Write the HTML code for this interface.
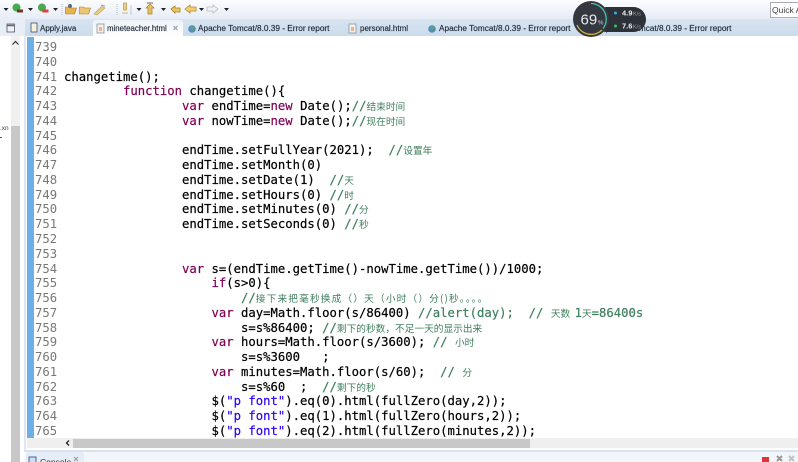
<!DOCTYPE html>
<html><head><meta charset="utf-8">
<style>
html,body{margin:0;padding:0;background:#fff}
#r{position:relative;width:798px;height:462px;overflow:hidden;background:#fff;font-family:"Liberation Sans","Noto Sans CJK SC",sans-serif;filter:blur(.35px)}
#r div{position:absolute}
.l{left:35px;width:740px;height:15px;white-space:pre;font:12.25px/15px "DejaVu Sans Mono","Noto Sans CJK SC",monospace;color:#000;-webkit-text-stroke:.2px currentColor}
.n{position:absolute;left:0;color:#787878;-webkit-text-stroke:0}
.t{position:absolute;left:29px}
.k{color:#7f0055}.s{color:#2a00ff}.c{color:#3f7f5f}.c i{font:normal 9.7px "Noto Sans CJK SC",sans-serif;-webkit-text-stroke:0}
.tab{top:23px;color:#1f2a38;white-space:pre;line-height:12px;-webkit-text-stroke:.15px currentColor}
</style></head><body><div id="r">

<div style="left:0;top:0;width:798px;height:19px;background:linear-gradient(#fbfcfe,#e6ecf6)"></div>
<div style="left:0;top:19px;width:798px;height:17px;background:linear-gradient(#d8e4f1,#cbdbeb)"></div>
<div style="left:0;top:19px;width:25px;height:17px;background:#e8eef6"></div>
<div style="left:93px;top:20px;width:90px;height:17px;background:linear-gradient(#eef3f9,#fff);border-radius:3px 3px 0 0"></div>

<svg style="position:absolute;left:0;top:0" width="240" height="36" viewBox="0 0 240 36">
<path d="M3.500 8h5l-2.500 3z M28 8h5l-2.500 3z M53 8h5l-2.500 3z M136.500 8h5l-2.500 3z M161 8h5l-2.500 3z M199 8h5l-2.500 3z M224 8h5l-2.500 3z" fill="#222"/>
<circle cx="16.500" cy="7.500" r="4" fill="#4aa850"/><rect x="17" y="9.500" width="6" height="3" fill="#6e3a20"/>
<circle cx="42" cy="7.500" r="4" fill="#4aa850"/><rect x="42.500" y="9.500" width="6" height="3" fill="#e2403a"/>
<path d="M62 4v11" stroke="#b5bcc8" stroke-dasharray="1 1"/>
<path d="M65.500 7h4l1 1h6l-2 6h-9z" fill="#e8b24e" stroke="#a97a28" stroke-width=".6"/><circle cx="70" cy="6" r="2" fill="#5a6a8a"/>
<path d="M79.500 7h4l1 1h6l-2 6h-9z" fill="#eec673" stroke="#a97a28" stroke-width=".6"/>
<path d="M94 14l8-8 3 2-8 7z" fill="#e9cd8a" stroke="#c0a050" stroke-width=".6"/><path d="M101 5l4 1" stroke="#9aa5b8"/>
<path d="M117 4v11" stroke="#b5bcc8" stroke-dasharray="1 1"/>
<path d="M123.500 3h3v7h-3z M122 13h6" fill="#e8d08a" stroke="#bfa050" stroke-width=".8"/>
<path d="M131 5v10" stroke="#c5cbd5"/>
<path d="M146 8l4-4 4 4h-2v6h-4v-6z" fill="#e9c05f" stroke="#a5802c" stroke-width=".7"/><path d="M147 3h6" stroke="#667"/>
<path d="M171 9l4-3v2h5v4h-5v1z" fill="#efc65c" stroke="#a5802c" stroke-width=".8"/>
<path d="M185 9l5-4v2h6v4h-6v2z" fill="#f3d070" stroke="#b08a30" stroke-width=".8"/>
<path d="M218 9l-5-4v2h-6v4h6v2z" fill="#f1f2f4" stroke="#b6bbc4" stroke-width=".8"/>
<rect x="7" y="24" width="7.500" height="8" fill="#eef1f6" stroke="#667" stroke-width=".9"/><path d="M7 25.500h7.500" stroke="#667" stroke-width="1.500"/>
<rect x="31" y="23" width="6" height="9" fill="#f4f1df" stroke="#40506a" stroke-width=".8"/>
<rect x="97" y="24" width="7" height="9" fill="#f5efe6" stroke="#8a94a5" stroke-width=".8"/><path d="M99 28h3M99 30h3" stroke="#d07a4a"/>
<path d="M173.500 26l4 4M177.500 26l-4 4" stroke="#a5a9af" stroke-width="1.300"/>
<circle cx="192" cy="29" r="3.800" fill="#4f8fc0"/><path d="M190 27l3-.5 1 2-2 2z" fill="#6aa65a"/>
</svg>

<div class="tab" style="left:40px;font-size:8px">Apply.java</div>
<div class="tab" style="left:107px;font-size:7.85px">mineteacher.html</div>
<div class="tab" style="left:198px;font-size:8.25px">Apache Tomcat/8.0.39 - Error report</div>
<svg style="position:absolute;left:348px;top:23px" width="12" height="12"><rect x="1" y="1" width="7" height="9" fill="#f5efe6" stroke="#8a94a5" stroke-width=".8"/><path d="M3 5h3M3 7h3" stroke="#d07a4a"/></svg>
<div class="tab" style="left:360px;font-size:8px">personal.html</div>
<svg style="position:absolute;left:427px;top:24px" width="10" height="10"><circle cx="5" cy="5" r="3.800" fill="#4f8fc0"/><path d="M3 3l3-.5 1 2-2 2z" fill="#6aa65a"/></svg>
<div class="tab" style="left:439px;font-size:8.25px">Apache Tomcat/8.0.39 - Error report</div>
<div class="tab" style="left:600px;font-size:8.25px">Apache Tomcat/8.0.39 - Error report</div>

<div style="left:770px;top:2px;width:30px;height:14px;background:#fff;border:1px solid #a9adb3;font-size:8.500px;line-height:14px;color:#444;white-space:pre;overflow:hidden;padding-left:1px">Quick Access</div>

<div style="left:0;top:36px;width:26px;height:426px;background:#f6f7f9"></div>
<div style="left:0;top:36px;width:11px;height:426px;background:#fff"></div>
<div style="left:11px;top:36px;width:9px;height:90px;background:#f0f0f0"></div>
<div style="left:11px;top:126px;width:9px;height:336px;background:#c8c8c8"></div>
<div style="left:20px;top:36px;width:5px;height:426px;background:#fff"></div>
<div style="left:24px;top:36px;width:2px;height:414px;background:#dfe7f2"></div>
<svg style="position:absolute;left:11px;top:40px" width="9" height="6"><path d="M1.500 4.500l3-3 3 3" fill="none" stroke="#333" stroke-width="1.200"/></svg>
<div style="left:0;top:125px;width:11px;font-size:6.500px;line-height:8px;color:#346;white-space:pre">.xn</div>
<div style="left:0;top:137px;width:2px;height:1px;background:#456"></div>

<div style="left:27px;top:37px;width:7px;height:401px;background:#6fafe6"></div>

<div id="c">
<div class="l" style="top:40px"><span class="n">739</span></div>
<div class="l" style="top:55px"><span class="n">740</span></div>
<div class="l" style="top:70px"><span class="n">741</span><span class="t">changetime();</span></div>
<div class="l" style="top:84px"><span class="n">742</span><span class="t">        <span class="k">function</span> changetime(){</span></div>
<div class="l" style="top:99px"><span class="n">743</span><span class="t">                <span class="k">var</span> endTime=<span class="k">new</span> Date();<span class="c">//<i>结束时间</i></span></span></div>
<div class="l" style="top:114px"><span class="n">744</span><span class="t">                <span class="k">var</span> nowTime=<span class="k">new</span> Date();<span class="c">//<i>现在时间</i></span></span></div>
<div class="l" style="top:129px"><span class="n">745</span></div>
<div class="l" style="top:143px"><span class="n">746</span><span class="t">                endTime.setFullYear(2021);  <span class="c">//<i>设置年</i></span></span></div>
<div class="l" style="top:158px"><span class="n">747</span><span class="t">                endTime.setMonth(0)</span></div>
<div class="l" style="top:173px"><span class="n">748</span><span class="t">                endTime.setDate(1)  <span class="c">//<i>天</i></span></span></div>
<div class="l" style="top:188px"><span class="n">749</span><span class="t">                endTime.setHours(0) <span class="c">//<i>时</i></span></span></div>
<div class="l" style="top:202px"><span class="n">750</span><span class="t">                endTime.setMinutes(0) <span class="c">//<i>分</i></span></span></div>
<div class="l" style="top:217px"><span class="n">751</span><span class="t">                endTime.setSeconds(0) <span class="c">//<i>秒</i></span></span></div>
<div class="l" style="top:232px"><span class="n">752</span></div>
<div class="l" style="top:247px"><span class="n">753</span></div>
<div class="l" style="top:262px"><span class="n">754</span><span class="t">                <span class="k">var</span> s=(endTime.getTime()-nowTime.getTime())/1000;</span></div>
<div class="l" style="top:276px"><span class="n">755</span><span class="t">                    <span class="k">if</span>(s&gt;0){</span></div>
<div class="l" style="top:291px"><span class="n">756</span><span class="t">                        <span class="c">//<i style="letter-spacing:1.150px">接下来把毫秒换成（）天（小时（）分()秒。。。。</i></span></span></div>
<div class="l" style="top:306px"><span class="n">757</span><span class="t">                    <span class="k">var</span> day=Math.floor(s/86400) <span class="c">//alert(day);  // <i>天数</i> <span style="margin-left:-3px">1</span><i>天</i>=86400s</span></span></div>
<div class="l" style="top:321px"><span class="n">758</span><span class="t">                        s=s%86400; <span class="c">//<i>剩下的秒数，不足一天的显示出来</i></span></span></div>
<div class="l" style="top:335px"><span class="n">759</span><span class="t">                    <span class="k">var</span> hours=Math.floor(s/3600); <span class="c">// <i>小时</i></span></span></div>
<div class="l" style="top:350px"><span class="n">760</span><span class="t">                        s=s%3600   ;</span></div>
<div class="l" style="top:365px"><span class="n">761</span><span class="t">                    <span class="k">var</span> minutes=Math.floor(s/60);  <span class="c">// <i>分</i></span></span></div>
<div class="l" style="top:380px"><span class="n">762</span><span class="t">                        s=s%60  ;  <span class="c">//<i>剩下的秒</i></span></span></div>
<div class="l" style="top:394px"><span class="n">763</span><span class="t">                    $(<span class="s">"p font"</span>).eq(0).html(fullZero(day,2));</span></div>
<div class="l" style="top:409px"><span class="n">764</span><span class="t">                    $(<span class="s">"p font"</span>).eq(1).html(fullZero(hours,2));</span></div>
<div class="l" style="top:424px"><span class="n">765</span><span class="t">                    $(<span class="s">"p font"</span>).eq(2).html(fullZero(minutes,2));</span></div>
</div>

<div style="left:27px;top:438px;width:771px;height:10px;background:#efefef"></div>
<div style="left:73px;top:439px;width:457px;height:9px;background:#c8c8c8"></div>
<svg style="position:absolute;left:63px;top:438px" width="9" height="10"><path d="M6 2.500l-2.500 2.500 2.500 2.500" fill="none" stroke="#222" stroke-width="1.300"/></svg>
<div style="left:24px;top:450px;width:774px;height:2px;background:#d7e2f3"></div>
<div style="left:26px;top:452px;width:772px;height:10px;background:#f2f5fa"></div>
<div style="left:26px;top:452px;width:58px;height:10px;background:#e6edf6;border-radius:3px 3px 0 0"></div>
<svg style="position:absolute;left:28px;top:456px" width="10" height="6"><rect x="1" y="1" width="7" height="7" fill="#cfe0f2" stroke="#46689a"/></svg>
<div style="left:40px;top:456px;font-size:8.500px;line-height:12px;color:#333">Console</div>
<svg style="position:absolute;left:72px;top:456px" width="9" height="6"><path d="M2 1l4 4M6 1l-4 4" stroke="#999"/></svg>
<svg style="position:absolute;left:760px;top:455px" width="38" height="7"><rect x="2" y="2" width="7" height="6" fill="#e0343a"/><path d="M17 1l5 5M22 1l-5 5" stroke="#999" stroke-width="2"/><path d="M29 1l5 5M34 1l-5 5" stroke="#c3c3c3" stroke-width="2"/></svg>

<svg style="position:absolute;left:572px;top:0" width="76" height="38" viewBox="0 0 76 38">
<rect x="22" y="7" width="52" height="25" rx="12.500" fill="#2d3138"/>
<circle cx="19" cy="19" r="18" fill="#343840"/>
<path d="M19 3.500a15.500 15.500 0 0 1 12 25" fill="none" stroke="#45c2a5" stroke-width="1.300"/>
<path d="M30 30a15.500 15.500 0 0 1-25-5" fill="none" stroke="#d9b23a" stroke-width="1.300"/>
<text x="8.500" y="24.500" font-family="Liberation Sans" font-size="15" fill="#e8eaec">69</text>
<text x="26" y="24.500" font-family="Liberation Sans" font-size="6" fill="#cfd2d6">%</text>
<circle cx="43.500" cy="13" r="1.500" fill="#39a8e0"/><circle cx="43.500" cy="26" r="1.500" fill="#3cc060"/>
<text x="50" y="15.500" font-family="Liberation Sans" font-size="7.500" font-weight="bold" fill="#f0f0f0">4.9</text>
<text x="61" y="15.500" font-family="Liberation Sans" font-size="5.500" fill="#9a9ea5">K/s</text>
<text x="50" y="28.500" font-family="Liberation Sans" font-size="7.500" font-weight="bold" fill="#f0f0f0">7.6</text>
<text x="61" y="28.500" font-family="Liberation Sans" font-size="5.500" fill="#9a9ea5">K/s</text>
</svg>

</div></body></html>
